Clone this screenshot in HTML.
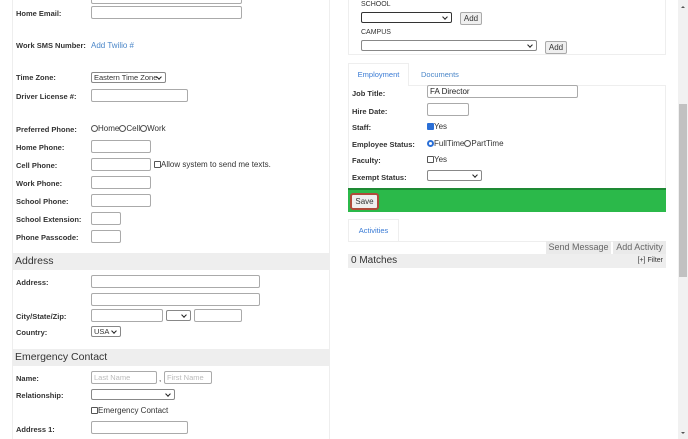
<!DOCTYPE html>
<html><head><style>
*{box-sizing:border-box;margin:0;padding:0}
body{width:688px;height:439px;overflow:hidden;background:#fff;font-family:"Liberation Sans",Arial,sans-serif;position:relative;color:#333}
.a{position:absolute}
.l{position:absolute;font-size:7.5px;font-weight:bold;color:#333;line-height:10px}
.t{position:absolute;font-size:8px;color:#333;line-height:10px}
.i{position:absolute;border:1px solid #aaa;border-radius:2px;background:#fff;height:13px}
.s{position:absolute;border:1px solid #888;border-radius:2px;background:#fff;height:11px;font-size:7.5px;line-height:9px;padding-left:2px;white-space:nowrap;overflow:hidden}
.s:after{content:"";position:absolute;right:4px;top:2px;width:3px;height:3px;border-right:1.3px solid #222;border-bottom:1.3px solid #222;transform:rotate(45deg)}
.b{position:absolute;border:1px solid #aaa;border-radius:2px;background:#efefef;font-size:8px;line-height:11px;text-align:center}
.h{position:absolute;left:12px;width:317px;height:17px;background:#eee;font-size:10.5px;line-height:17px;padding-left:3px;color:#333}
.cb{display:inline-block;width:7px;height:7px;border:1px solid #555;border-radius:1px;vertical-align:-1px;background:#fff}
.rd{display:inline-block;width:7px;height:7px;border:1px solid #555;border-radius:50%;vertical-align:-1px;background:#fff}
</style></head><body>
<div class="a" style="left:12px;top:0;width:1px;height:439px;background:#eee"></div>
<div class="a" style="left:329px;top:0;width:1px;height:439px;background:#eee"></div>
<div class="i" style="left:91px;top:-9px;width:151px"></div>
<div class="l" style="left:16px;top:9px">Home Email:</div><div class="i" style="left:91px;top:6px;width:151px"></div>
<div class="l" style="left:16px;top:41px">Work SMS Number:</div><div class="t" style="left:91px;top:41px;color:#4a86c8;font-weight:normal">Add Twilio #</div>
<div class="l" style="left:16px;top:73px">Time Zone:</div><div class="s" style="left:91px;top:72px;width:75px">Eastern Time Zone</div>
<div class="l" style="left:16px;top:92px">Driver License #:</div><div class="i" style="left:91px;top:89px;width:97px"></div>
<div class="l" style="left:16px;top:125px">Preferred Phone:</div><div class="t" style="left:91px;top:124px"><span class="rd"></span>Home<span class="rd"></span>Cell<span class="rd"></span>Work</div>
<div class="l" style="left:16px;top:143px">Home Phone:</div><div class="i" style="left:91px;top:140px;width:60px"></div>
<div class="l" style="left:16px;top:161px">Cell Phone:</div><div class="i" style="left:91px;top:158px;width:60px"></div><div class="t" style="left:154px;top:160px"><span class="cb"></span>Allow system to send me texts.</div>
<div class="l" style="left:16px;top:179px">Work Phone:</div><div class="i" style="left:91px;top:176px;width:60px"></div>
<div class="l" style="left:16px;top:197px">School Phone:</div><div class="i" style="left:91px;top:194px;width:60px"></div>
<div class="l" style="left:16px;top:215px">School Extension:</div><div class="i" style="left:91px;top:212px;width:30px"></div>
<div class="l" style="left:16px;top:233px">Phone Passcode:</div><div class="i" style="left:91px;top:230px;width:30px"></div>
<div class="h" style="top:253px">Address</div>
<div class="l" style="left:16px;top:278px">Address:</div><div class="i" style="left:91px;top:275px;width:169px"></div>
<div class="i" style="left:91px;top:293px;width:169px"></div>
<div class="l" style="left:16px;top:312px">City/State/Zip:</div><div class="i" style="left:91px;top:309px;width:72px"></div><div class="s" style="left:166px;top:310px;width:25px"></div><div class="i" style="left:194px;top:309px;width:48px"></div>
<div class="l" style="left:16px;top:328px">Country:</div><div class="s" style="left:91px;top:326px;width:30px">USA</div>
<div class="h" style="top:349px">Emergency Contact</div>
<div class="l" style="left:16px;top:374px">Name:</div><div class="i" style="left:91px;top:371px;width:66px;font-size:7.5px;color:#bbb;padding-left:2px;line-height:11px">Last Name</div><div class="t" style="left:159px;top:374px">,</div><div class="i" style="left:164px;top:371px;width:48px;font-size:7.5px;color:#bbb;padding-left:2px;line-height:11px">First Name</div>
<div class="l" style="left:16px;top:391px">Relationship:</div><div class="s" style="left:91px;top:389px;width:84px"></div>
<div class="t" style="left:91px;top:406px"><span class="cb"></span>Emergency Contact</div>
<div class="l" style="left:16px;top:425px">Address 1:</div><div class="i" style="left:91px;top:421px;width:97px"></div>

<div class="a" style="left:348px;top:-1px;width:318px;height:56px;border:1px solid #eee"></div>
<div class="t" style="left:361px;top:0px;font-size:7px">SCHOOL</div>
<div class="s" style="left:361px;top:12px;width:91px;border-color:#333"></div><div class="b" style="left:460px;top:12px;width:22px;height:13px">Add</div>
<div class="t" style="left:361px;top:28px;font-size:7px">CAMPUS</div>
<div class="s" style="left:361px;top:40px;width:176px"></div><div class="b" style="left:545px;top:41px;width:22px;height:13px">Add</div>
<div class="a" style="left:348px;top:85px;width:318px;height:104px;border:1px solid #eee"></div>
<div class="a" style="left:348px;top:63px;width:61px;height:23px;border:1px solid #eee;border-bottom:none;background:#fff;font-size:7.5px;color:#3a7bd5;text-align:center;line-height:22px">Employment</div>
<div class="t" style="left:421px;top:70px;color:#4a86c8;font-size:7.5px">Documents</div>
<div class="l" style="left:352px;top:89px">Job Title:</div><div class="i" style="left:427px;top:85px;width:151px;font-size:8px;line-height:11px;padding-left:2px;color:#222">FA Director</div>
<div class="l" style="left:352px;top:107px">Hire Date:</div><div class="i" style="left:427px;top:103px;width:42px"></div>
<div class="l" style="left:352px;top:123px">Staff:</div><div class="t" style="left:427px;top:122px"><span class="cb" style="background:#2a6fd6;border-color:#2a6fd6"></span>Yes</div>
<div class="l" style="left:352px;top:140px">Employee Status:</div><div class="t" style="left:427px;top:139px"><span class="rd" style="border:2.5px solid #2a6fd6"></span>FullTime<span class="rd"></span>PartTime</div>
<div class="l" style="left:352px;top:156px">Faculty:</div><div class="t" style="left:427px;top:155px"><span class="cb"></span>Yes</div>
<div class="l" style="left:352px;top:173px">Exempt Status:</div><div class="s" style="left:427px;top:170px;width:55px"></div>
<div class="a" style="left:348px;top:188px;width:318px;height:24px;background:#2bb94a;border-top:2px solid #1e8a34"></div>
<div class="b" style="left:350px;top:193px;width:29px;height:17px;border:2px solid #b04a3a;border-radius:3px;line-height:13px">Save</div>
<div class="a" style="left:348px;top:219px;width:51px;height:23px;border:1px solid #eee;border-bottom:none;font-size:7.5px;color:#3a7bd5;text-align:center;line-height:22px">Activities</div>
<div class="a" style="left:348px;top:241px;width:318px;height:1px;background:#eee"></div>
<div class="a" style="left:546px;top:241px;width:65px;height:13px;background:#eaeaea;font-size:9px;color:#666;text-align:center;line-height:13px">Send Message</div>
<div class="a" style="left:613px;top:241px;width:53px;height:13px;background:#eaeaea;font-size:9px;color:#666;text-align:center;line-height:13px">Add Activity</div>
<div class="a" style="left:348px;top:254px;width:318px;height:14px;background:#eee;font-size:10px;line-height:14px;padding-left:3px;color:#333">0 Matches<span style="float:right;font-size:7px;padding-right:3px">[+] Filter</span></div>

<div class="a" style="left:678px;top:0;width:10px;height:439px;background:#f1f1f1"></div>
<div class="a" style="left:679px;top:104px;width:8px;height:173px;background:#c1c1c1"></div>
<div class="a" style="left:681px;top:4px;width:0;height:0;border:2px solid transparent;border-bottom:2px solid #555"></div>
<div class="a" style="left:681px;top:432px;width:0;height:0;border:2px solid transparent;border-top:2px solid #555"></div>
</body></html>
